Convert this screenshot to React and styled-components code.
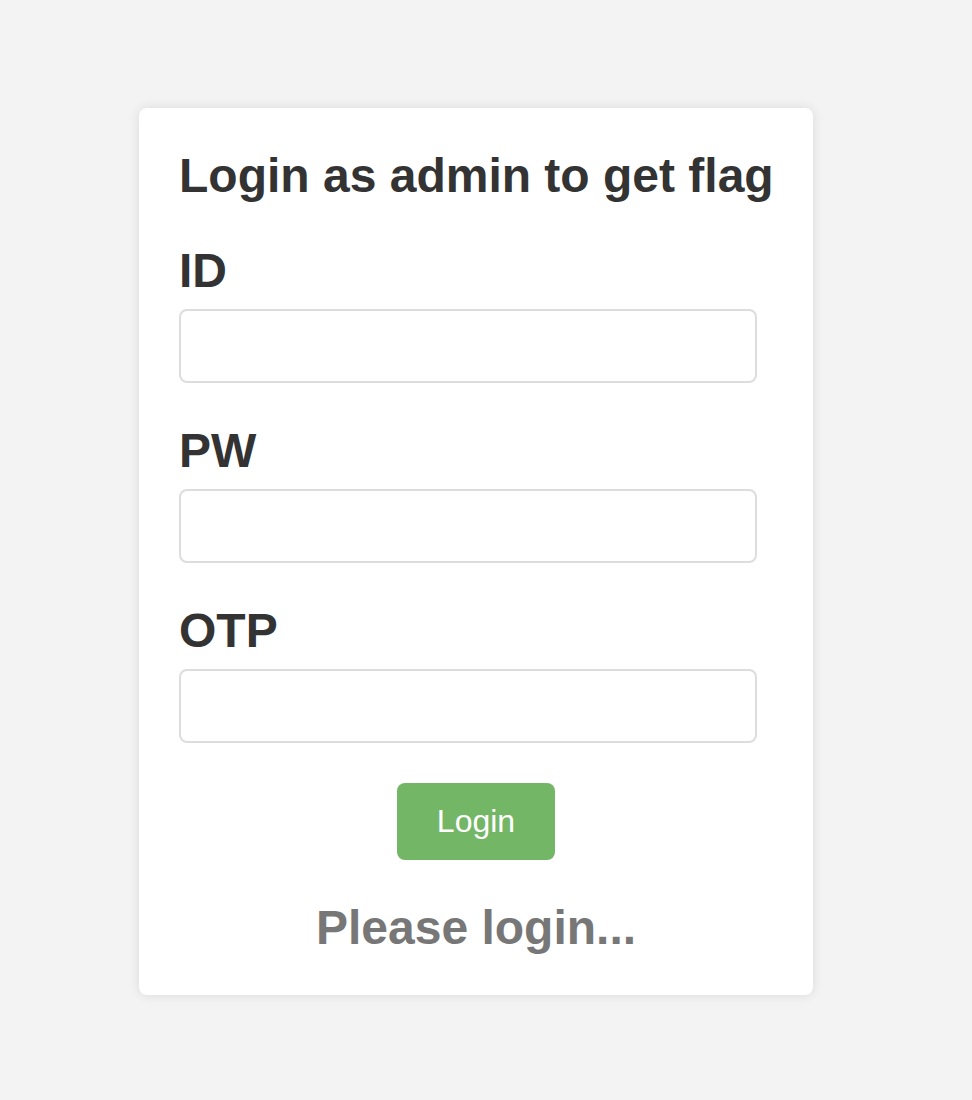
import React, { useState } from "react"
import styled, { createGlobalStyle } from "styled-components"

const GlobalStyle = createGlobalStyle`
    html, body {
        margin: 0;
        padding: 0;
    }
    body {
        background-color: #f3f3f3;
        font-family: "Liberation Sans", Arial, Helvetica, sans-serif;
        color: #333;
    }
`

const Page = styled.div`
    min-height: 1100px;
    display: flex;
    align-items: center;
    justify-content: center;
    padding-right: 20px;
    padding-top: 2px;
    box-sizing: border-box;
`

const Card = styled.div`
    width: 674px;
    box-sizing: border-box;
    padding: 40px;
    background-color: #fff;
    border-radius: 8px;
    box-shadow: 0 0 12px rgba(0, 0, 0, 0.1);
    display: flex;
    flex-direction: column;
`

const Title = styled.h2`
    margin: 0 0 40px;
    font-size: 48px;
    line-height: 55px;
    font-weight: 700;
    color: #333;
    white-space: nowrap;
`

const Field = styled.div`
    display: flex;
    flex-direction: column;
    margin-bottom: 40px;
`

const Label = styled.label`
    font-size: 48px;
    line-height: 55px;
    font-weight: 700;
    color: #333;
    margin-bottom: 11px;
`

const Input = styled.input`
    width: 578px;
    height: 74px;
    box-sizing: border-box;
    border: 2px solid #ddd;
    border-radius: 8px;
    padding: 0 16px;
    font-size: 28px;
    font-family: inherit;
    outline: none;
`

const Button = styled.button`
    align-self: center;
    width: 158px;
    height: 77px;
    border: none;
    border-radius: 8px;
    background-color: #73b666;
    color: #fff;
    font-family: inherit;
    font-size: 32px;
    cursor: pointer;
`

const Status = styled.h2`
    margin: 40px 0 0;
    font-size: 48px;
    line-height: 55px;
    font-weight: 700;
    color: #777;
    text-align: center;
`

const fields = [
    { name: "id", label: "ID", type: "text" },
    { name: "pw", label: "PW", type: "password" },
    { name: "otp", label: "OTP", type: "text" },
]

const App = () => {
    const [values, setValues] = useState({ id: "", pw: "", otp: "" })

    return (
        <Page>
            <GlobalStyle />
            <Card>
                <Title>Login as admin to get flag</Title>
                {fields.map((f) => (
                    <Field key={f.name}>
                        <Label htmlFor={f.name}>{f.label}</Label>
                        <Input
                            id={f.name}
                            type={f.type}
                            value={values[f.name]}
                            onChange={(e) =>
                                setValues({ ...values, [f.name]: e.target.value })
                            }
                        />
                    </Field>
                ))}
                <Button>Login</Button>
                <Status>Please login...</Status>
            </Card>
        </Page>
    )
}

export default App
